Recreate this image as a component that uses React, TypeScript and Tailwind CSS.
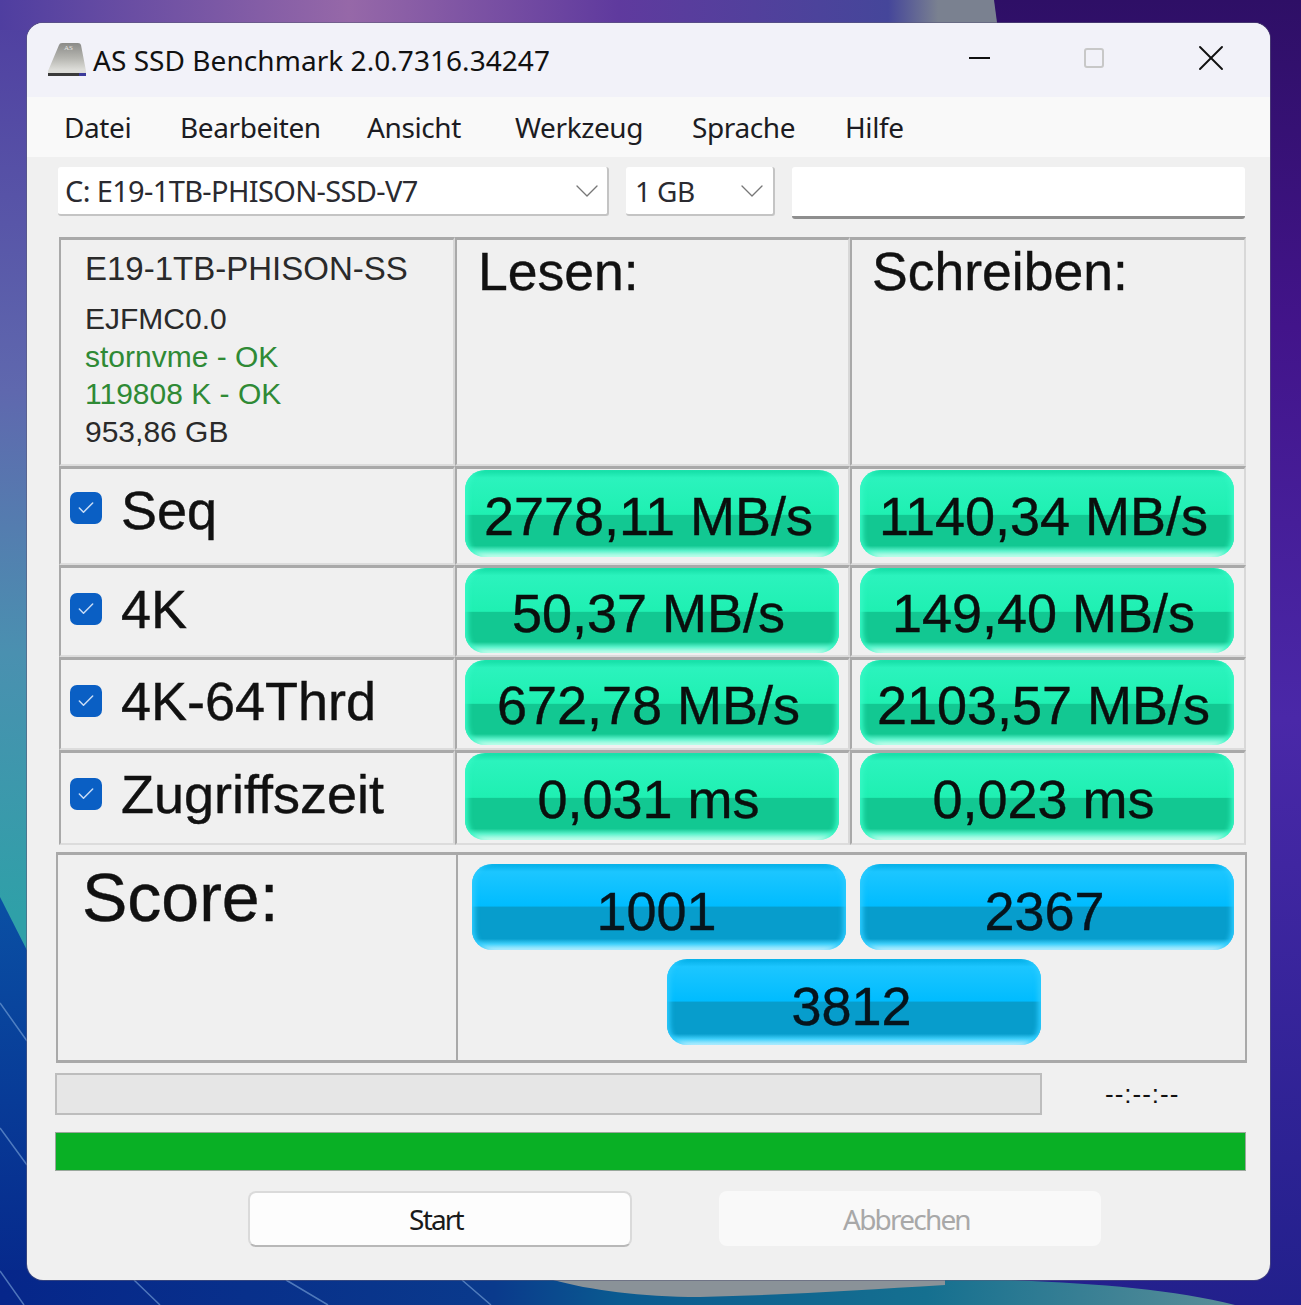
import { ChevronDown, Check, X } from 'lucide-react';

const SANS = "font-['Liberation_Sans',Arial,sans-serif]";
const UI = "font-['Noto_Sans',sans-serif]";

const rows = [
  { label: 'Seq', read: '2778,11 MB/s', write: '1140,34 MB/s', h: 'h-[99px]', btn: 'h-[87px]', pt: 'pt-[1px]', box: 'mt-[10px]' },
  { label: '4K', read: '50,37 MB/s', write: '149,40 MB/s', h: 'h-[92px]', btn: 'h-[85px]', pt: 'pt-0', box: 'mt-[12px]' },
  { label: '4K-64Thrd', read: '672,78 MB/s', write: '2103,57 MB/s', h: 'h-[93px]', btn: 'h-[85px]', pt: 'pt-0', box: 'mt-[12px]' },
  { label: 'Zugriffszeit', read: '0,031 ms', write: '0,023 ms', h: 'h-[95px]', btn: 'h-[87px]', pt: 'pt-0', box: 'mt-[12px]' },
];

const menu = [
  { name: 'Datei', w: 'w-[116px]' },
  { name: 'Bearbeiten', w: 'w-[187px]' },
  { name: 'Ansicht', w: 'w-[148px]' },
  { name: 'Werkzeug', w: 'w-[177px]' },
  { name: 'Sprache', w: 'w-[153px]' },
  { name: 'Hilfe', w: 'w-[80px]' },
];

const Cell = ({ className, children }: { className: string; children?: React.ReactNode }) => (
  <div className={`border-2 border-t-[3px] border-[#a9a9a9] border-r-[#d8d8d8] border-b-[#dcdcdc] ${className}`}>{children}</div>
);

const GreenPill = ({ value, height }: { value: string; height: string }) => (
  <div
    className={`${height} w-[374px] rounded-[20px] flex items-center justify-center pr-[7px] text-[54px] leading-none text-[#0a0f0d] [-webkit-text-stroke:0.4px_#0a0f0d] bg-[linear-gradient(180deg,#14dca5_0%,#2bf3bd_9%,#1ff0b2_51%,#12c892_52%,#12c892_87%,#5cf3cc_93%,#d8fff2_100%)] shadow-[inset_6px_0_5px_-3px_#35f8c4,inset_-6px_0_5px_-3px_#35f8c4]`}
  >
    <span className="pt-[5px]">{value}</span>
  </div>
);

const BluePill = ({ value }: { value: string }) => (
  <div className="h-[86px] w-[374px] rounded-[20px] flex items-center justify-center pr-[5px] text-[54px] leading-none text-[#06141c] [-webkit-text-stroke:0.4px_#06141c] bg-[linear-gradient(180deg,#03ade6_0%,#1cc6ff_9%,#00bcff_49%,#079dcc_50%,#079dcc_87%,#3fd0fb_93%,#c8f2ff_100%)] shadow-[inset_6px_0_5px_-3px_#2acbff,inset_-6px_0_5px_-3px_#2acbff]">
    <span className="pt-[7px]">{value}</span>
  </div>
);

const Wallpaper = () => (
  <svg className="absolute inset-0 w-full h-full" viewBox="0 0 1301 1305" preserveAspectRatio="none">
    <defs>
      <linearGradient id="top" x1="0" x2="1" y1="0" y2="0">
        <stop offset="0" stopColor="#4f3ea0" />
        <stop offset="0.35" stopColor="#9668a8" />
        <stop offset="0.62" stopColor="#5f3a9e" />
        <stop offset="0.89" stopColor="#45469a" />
        <stop offset="0.94" stopColor="#7a8190" />
        <stop offset="1" stopColor="#7a8190" />
      </linearGradient>
      <linearGradient id="left" x1="0" x2="0" y1="0" y2="1">
        <stop offset="0" stopColor="#4f3ea0" />
        <stop offset="0.3" stopColor="#5f68ae" />
        <stop offset="0.5" stopColor="#4a90b0" />
        <stop offset="0.7" stopColor="#2fa0a8" />
      </linearGradient>
      <linearGradient id="right" x1="0" x2="0" y1="0" y2="1">
        <stop offset="0" stopColor="#2e0f66" />
        <stop offset="0.25" stopColor="#42148a" />
        <stop offset="0.55" stopColor="#4a28a8" />
        <stop offset="1" stopColor="#22208c" />
      </linearGradient>
      <linearGradient id="navy" x1="0" x2="0" y1="0" y2="1">
        <stop offset="0" stopColor="#0a50a4" />
        <stop offset="1" stopColor="#06268a" />
      </linearGradient>
      <linearGradient id="bottom" x1="0" x2="1" y1="0" y2="0">
        <stop offset="0" stopColor="#06268a" />
        <stop offset="0.4" stopColor="#0a3a8c" />
        <stop offset="0.5" stopColor="#0a5a90" />
        <stop offset="0.75" stopColor="#157090" />
        <stop offset="1" stopColor="#5a8e98" />
      </linearGradient>
    </defs>
    <rect width="1301" height="1305" fill="url(#right)" />
    <rect width="640" height="1305" fill="url(#left)" />
    <path d="M0 897L40 976V1305H0Z" fill="url(#navy)" />
    <path d="M0 0H994L998 30H0Z" fill="url(#top)" />
    <path d="M0 1270H700C860 1282 1100 1270 1235 1305H0Z" fill="url(#bottom)" />
    <path d="M553 1270H945L945 1285C860 1290 790 1295 700 1297C640 1297 590 1290 553 1280Z" fill="#8a9298" />
    <g stroke="#7fa8dc" strokeWidth="1.5" fill="none" opacity="0.6">
      <path d="M0 1003L27 1041M0 1128L27 1165M0 1271L24 1305M134 1280L160 1305M286 1280L328 1305M462 1280L491 1305" />
    </g>
  </svg>
);

export default function App() {
  return (
    <div className={`relative w-[1301px] h-[1305px] overflow-hidden ${UI}`}>
      <Wallpaper />
      <div className="relative pt-[23px] pl-[27px]">
        <div className="w-[1243px] h-[1257px] rounded-[16px] overflow-hidden bg-[#f0f0f0] flex flex-col shadow-[0_0_0_1px_rgba(90,90,120,0.55)]">
          {/* title bar */}
          <div className="h-[74px] shrink-0 bg-[#f2f2f9] flex items-center pl-[20px]">
            <svg width="40" height="36" viewBox="0 0 40 36" className="mr-[6px]">
              <defs>
                <linearGradient id="hdd" x1="0" x2="0" y1="0" y2="1">
                  <stop offset="0" stopColor="#8b8b88" />
                  <stop offset="0.5" stopColor="#b5b5b0" />
                  <stop offset="0.88" stopColor="#dcdcd8" />
                </linearGradient>
              </defs>
              <path d="M12 3Q12.500 1 15 1H31Q33.500 1 34 3L39 29V31H1V29Z" fill="url(#hdd)" />
              <path d="M1 31H39V34H1Z" fill="#3a3a3a" />
              <path d="M32 31H39V34H32Z" fill="#3b3a9a" />
              <text x="17" y="8" fontSize="7" fill="#e8e8e4" fontFamily="Liberation Serif">AS</text>
            </svg>
            <span className="text-[28px] text-[#111] tracking-[0.05px]">AS SSD Benchmark 2.0.7316.34247</span>
            <div className="ml-auto flex items-center h-full">
              <div className="w-[21px] h-[2px] bg-[#111] mr-[94px] -mt-[4px]" />
              <div className="w-[20px] h-[20px] rounded-[3px] border-2 border-[#c8c8c8] mr-[85px] -mt-[4px]" />
              <X className="w-[44px] h-[44px] mr-[37px] -mt-[4px] text-[#111]" strokeWidth={1.05} />
            </div>
          </div>
          {/* menu */}
          <div className="h-[60px] shrink-0 bg-[#f9f9f9] flex items-center pl-[37px] text-[28px] text-[#1c1c22]">
            {menu.map((item) => (
              <span key={item.name} className={`${item.w} shrink-0 tracking-[-0.4px]`}>{item.name}</span>
            ))}
          </div>
          {/* drive selectors */}
          <div className="flex items-start pt-[10px] pl-[31px] h-[80px] shrink-0 text-[28px] text-[#2a2a30]">
            <div className="w-[551px] h-[49px] bg-white rounded-[3px] border-b-2 border-r-2 border-[#c4c4c4] flex items-center pl-[7px]">
              <span className="text-[29px] tracking-[-0.65px]">C: E19-1TB-PHISON-SSD-V7</span>
              <ChevronDown className="ml-auto w-[40px] h-[40px] text-[#777]" strokeWidth={0.8} />
            </div>
            <div className="ml-[17px] w-[149px] h-[49px] bg-white rounded-[3px] border-b-2 border-r-2 border-[#c4c4c4] flex items-center pl-[9px] pr-[1px]">
              <span className="tracking-[-0.6px]">1 GB</span>
              <ChevronDown className="ml-auto w-[40px] h-[40px] text-[#777]" strokeWidth={0.8} />
            </div>
            <div className="ml-[17px] w-[453px] h-[52px] bg-white rounded-[3px] border-b-[3px] border-[#8e8e8e]" />
          </div>
          {/* results table */}
          <div className={`ml-[32px] w-[1187px] ${SANS} text-[#111]`}>
            <div className="flex h-[229px]">
              <Cell className="w-[396px] pl-[24px] pt-[9px]">
                <p className="text-[33px] leading-[40px] text-[#2a2a2a] mb-[11px]">E19-1TB-PHISON-SS</p>
                <div className="text-[30px] leading-[37.7px] text-[#2a2a2a]">
                  <p>EJFMC0.0</p>
                  <p className="text-[#2f8a35]">stornvme - OK</p>
                  <p className="text-[#2f8a35]">119808 K - OK</p>
                  <p>953,86 GB</p>
                </div>
              </Cell>
              <Cell className="w-[395px] pl-[21px] pt-[1px] text-[53.500px] leading-[62px] [-webkit-text-stroke:0.4px_#111]">Lesen:</Cell>
              <Cell className="w-[396px] pl-[20px] pt-[1px] text-[53.500px] leading-[62px] [-webkit-text-stroke:0.4px_#111]">Schreiben:</Cell>
            </div>
            {rows.map((row) => (
              <div key={row.label} className={`flex ${row.h}`}>
                <Cell className="w-[396px] flex items-start pl-[9px] pt-[13px]">
                  <div className={`w-[32px] h-[32px] ${row.box} rounded-[7px] bg-[#0a5fc4] flex items-center justify-center`}>
                    <Check className="w-[20px] h-[20px] text-[#c8dcf5]" strokeWidth={1.8} />
                  </div>
                  <span className="ml-[19px] text-[54px] leading-[56px] [-webkit-text-stroke:0.4px_#111]">{row.label}</span>
                </Cell>
                <Cell className={`w-[395px] flex pl-[8px] ${row.pt}`}>
                  <GreenPill value={row.read} height={row.btn} />
                </Cell>
                <Cell className={`w-[396px] flex pl-[8px] ${row.pt}`}>
                  <GreenPill value={row.write} height={row.btn} />
                </Cell>
              </div>
            ))}
            {/* score */}
            <div className="flex h-[211px] mt-[7px] -ml-[3px] w-[1191px] border-2 border-t-[3px] border-[#a9a9a9] border-b-[3px]">
              <div className="w-[400px] border-r-2 border-[#a9a9a9] pl-[24px] pt-[3px] text-[68px] leading-[78px] [-webkit-text-stroke:0.4px_#111]">Score:</div>
              <div className="flex-1 pl-[14px] pt-[9px]">
                <div className="flex gap-[14px]">
                  <BluePill value="1001" />
                  <BluePill value="2367" />
                </div>
                <div className="mt-[9px] ml-[195px]">
                  <BluePill value="3812" />
                </div>
              </div>
            </div>
            {/* progress */}
            <div className="flex items-center -ml-[4px] mt-[10px]">
              <div className="w-[987px] h-[42px] bg-[#e6e6e6] border-2 border-[#bdbdbd]" />
              <span className="ml-[63px] text-[26px] leading-none text-[#111] tracking-[1px]">--:--:--</span>
            </div>
            <div className="-ml-[4px] mt-[17px] w-[1191px] h-[39px] bg-[#09b025] border border-[#9aa89c]" />
            {/* buttons */}
            <div className={`flex mt-[20px] ml-[189px] gap-[87px] text-[28px] tracking-[-1.8px] ${UI}`}>
              <div className="w-[384px] h-[56px] rounded-[8px] bg-[#fdfdfd] border-2 border-[#dadada] border-b-[#b8b8b8] flex items-center justify-center pr-[8px] text-[#1a1a1a]">
                Start
              </div>
              <div className="w-[382px] h-[55px] rounded-[8px] bg-[#f9f9f9] flex items-center justify-center pr-[7px] text-[#a8a8a8]">
                Abbrechen
              </div>
            </div>
          </div>
        </div>
      </div>
    </div>
  );
}
